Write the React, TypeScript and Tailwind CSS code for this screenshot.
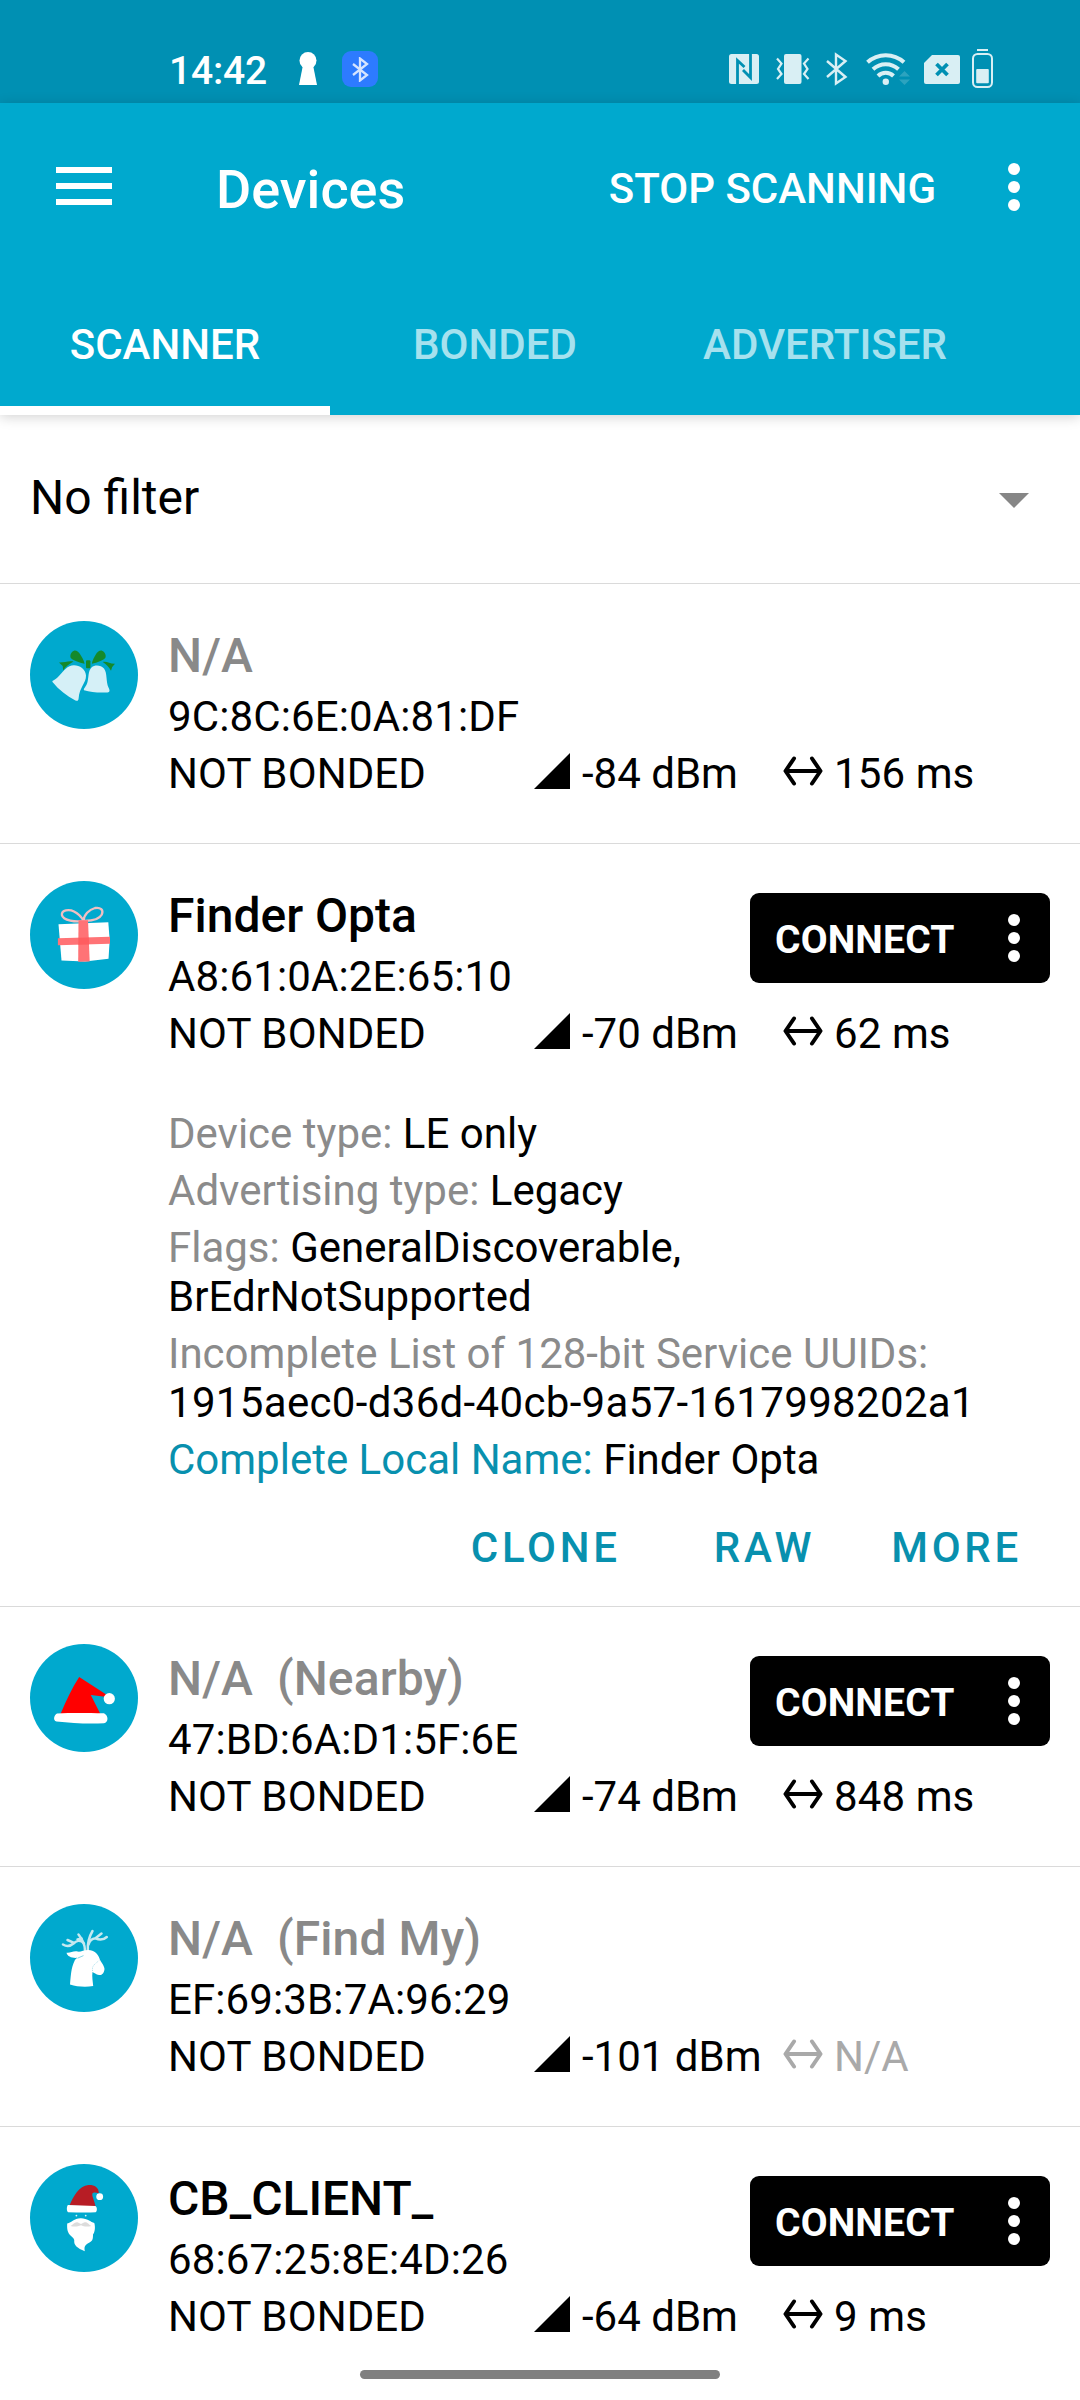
import type { ReactNode } from "react";

type Device = {
  avatar: ReactNode;
  name: string;
  known: boolean;
  address: string;
  rssi: string;
  interval?: string;
  connectable: boolean;
  expanded?: boolean;
};

function Disc({ children }: { children: ReactNode }) {
  return (
    <svg width="108" height="108" viewBox="0 0 108 108" className="block shrink-0">
      <circle cx="54" cy="54" r="54" fill="#00a9ce" />
      {children}
    </svg>
  );
}

const Bells = () => (
  <Disc>
    <g fill="#15892b">
      <path d="M54.6 42.8C49 41.5 43 39.500 40.800 37C39.500 35 41 30.500 44 29.700C46.500 29.200 48.500 31 49.600 32.500C51.300 35 54 39 54.600 42.800Z" />
      <path d="M61.800 42.800C67.500 41.500 73 39.500 75.200 37C76.500 35 75 30.500 72 29.700C69.500 29.200 67.500 31 66.400 32.500C64.700 35 62.400 39 61.800 42.800Z" />
      <rect x="56" y="39.200" width="4.400" height="8" rx="1" />
      <path d="M29 41.500C34 41.700 39 39.400 43.500 40.600C39 43 35.500 46 33.200 49.400L32.700 45Z" />
      <path d="M85 42.800C80 43 77 40.200 72.800 41C76 43 79 46 81 49.800L82.200 46Z" />
    </g>
    <g fill="#d5f0f7">
      <path d="M22.500 61C21.800 59.600 24 59.300 26 57.700C31 54 34 47.500 39.500 45.200C46.500 42.400 55.500 47 56 54.500C56.200 62 49.500 66 48.600 77.500C48.400 80 47 80.300 45 79.200C37 75 29 69 22.500 61Z" />
      <path d="M54 69.200C53.200 67.500 56.500 65.500 57.500 61C58.800 56 58 50 61.500 46.500C65 43.500 71 44.200 74 47.500C77.500 52 75.800 61 78.500 66.500C80 69.500 80 71.300 77.500 71.400C69.500 71.800 61 71.500 54 69.200Z" />
    </g>
  </Disc>
);

const Gift = () => (
  <Disc>
    <path d="M28.500 43.200L78.300 41.200L79.700 59L78.500 77.800L55 80.500L31.500 79.500Z" fill="#fff" />
    <path d="M53.500 39.800C46 41.500 33 39.500 31.900 34C31.400 29 39 28 44 30.500C49 33 52 37 53.500 39.800C53.800 34 59 28.500 65 27C70.500 26 73.800 29 71.800 33.500C69.500 38 62 40 53.500 39.800Z" fill="none" stroke="#f0bfc2" strokeWidth="2.300" />
    <path d="M48.500 39.300H58L59.700 80.500L48.200 80.800Z" fill="#ff7376" />
    <path d="M27.900 57.300L80 55.800V62.800L27.900 64.200Z" fill="#ff7376" />
    <path d="M48.400 56.700L58.900 56.400L59.100 63.400L48.300 63.700Z" fill="#ff5d60" />
  </Disc>
);

const Hat = () => (
  <Disc>
    <path d="M49.200 33L76.200 50.500L75 52.700L60.800 51L70.400 70H30.500C36 57 42 44 49.200 33Z" fill="#f00" />
    <path d="M27 69.500C44 68.800 58 69.200 74 69.300C79 72 78.300 78.500 74 79.200C58 80.200 42 79 26.500 77.500C22.500 76.500 24 71 27 69.500Z" fill="#fff" />
    <circle cx="79.300" cy="54.700" r="5.600" fill="#fff" />
  </Disc>
);

const Reindeer = () => (
  <Disc>
    <g fill="none" stroke="#c5e9f0" strokeWidth="2.500" strokeLinecap="round" strokeLinejoin="round">
      <path d="M55 46.500C55 42 54.500 38 48.500 30.500" />
      <path d="M54 39.500C50 35 46 37 43.500 39.500C40 42.500 36 42.300 33 40.500M37.500 36L43.500 38.700M51.500 34.500L47.500 35.500" />
      <path d="M57.800 46.500C57.500 40 59 33 62.500 27" />
      <path d="M58.500 40.500C60 35 63.500 34.500 65.500 34.300C70 36.500 74 35.500 76.800 33M65.500 34.300L71.500 29.500" />
    </g>
    <path d="M36.500 48.700C40 49.500 43 46.700 47.500 47.500C50 48.300 54 45.900 58.500 46C64 46.500 68 49.500 69.500 54.500C70.500 58 74.200 61 74.500 65C74.200 69 72 71.500 69 71C66 70.700 64 68.500 62.500 68C61.800 73 62.800 77 63.200 82C55 83.500 47 82.600 40 80.500C40.800 72 41 64 44.500 57C45 55.700 46 54.700 47.300 53.800C42 54.300 37.500 52.500 36.500 48.700Z" fill="#fff" />
    <path d="M47.500 54.200L53.500 51.600" stroke="#7ccfe1" strokeWidth=".9" />
    <path d="M62.500 67V63.500C64 60 66.500 59 69.500 56" fill="none" stroke="#9edbe8" strokeWidth=".8" strokeDasharray="1.200 1" />
  </Disc>
);

const Santa = () => (
  <Disc>
    <path d="M39.500 41.500C43 33 49 21.500 58.500 21C64 20.700 69 23 68.800 29.500C66 28 62.500 28 62.300 30C62 33 64.700 37 65.500 42.500Z" fill="#b71d25" />
    <path d="M38 41L65.500 42C67.500 43.500 67.200 48 65.500 48.200C56 49 47 48.300 38 48.200C36.500 47 36.500 42 38 41Z" fill="#fff" />
    <circle cx="69.700" cy="32.700" r="3.400" fill="#fff" />
    <circle cx="46.400" cy="51.600" r=".9" fill="#d7f1f7" />
    <circle cx="55.700" cy="51.600" r=".9" fill="#d7f1f7" />
    <path d="M37.200 59.500C42 58.500 44 54 51 54.200C57 54.300 61 58 64.300 59C65.500 63 65 68 63 70.500C63 74 63 77 59.500 78.500C54 81.500 54.300 83 54.800 87.300C51 85.500 44.500 83 44.200 78C45 74.500 42 73 40 71C37 67.500 37 63.500 37.200 59.500Z" fill="#fff" />
    <path d="M40.500 62C43 61 44.500 57.500 48 58.500L51 60L54 58.500C57.500 57.500 59 61 61.200 62C57 63.200 53.500 62.500 51 61.200C48 62.500 44.500 63.200 40.500 62Z" fill="#dcdcdc" />
  </Disc>
);

const Dots = () => (
  <svg width="12" height="48" viewBox="0 0 12 48" fill="#fff" className="block shrink-0">
    <circle cx="6" cy="6" r="6" />
    <circle cx="6" cy="24" r="6" />
    <circle cx="6" cy="42" r="6" />
  </svg>
);

const Signal = () => (
  <svg width="36" height="36" viewBox="0 0 36 36" className="block shrink-0">
    <path d="M0 36L36 0V36Z" />
  </svg>
);

const Interval = () => (
  <svg width="40" height="30" viewBox="0 0 40 30" fill="none" stroke="currentColor" strokeWidth="4" strokeLinejoin="round" strokeLinecap="round" className="block shrink-0">
    <path d="M3 15H37M11 2.500L2.500 15L11 27.500M29 2.500L37.500 15L29 27.500" />
  </svg>
);

function StatusBar() {
  return (
    <div className="flex h-[103px] items-start bg-[#0090b3] pl-[169px] text-[#d9eff4]">
      <div className="mt-[48px] w-[130px] text-[39px] leading-[46px] font-medium tracking-[-0.2px] text-white">14:42</div>
      <svg width="18" height="33" viewBox="0 0 18 33" fill="#fff" className="mt-[52px] mr-[25px] shrink-0">
        <circle cx="9" cy="8.500" r="8.500" />
        <path d="M4 13H14L18 33H0Z" />
      </svg>
      <div className="mt-[51px] mr-[351px] flex size-[36px] shrink-0 items-center justify-center rounded-[9px] bg-[#2d7bff]">
        <svg width="17" height="25" viewBox="0 0 17 25" fill="none" stroke="#d5e5ff" strokeWidth="2.300">
          <path d="M1 7L15 18L8 23.500V1.500L15 7L1 18" />
        </svg>
      </div>
      {/* NFC */}
      <svg width="30" height="30" viewBox="0 0 30 30" className="mt-[54px] mr-[17px] shrink-0">
        <rect width="30" height="30" rx="2.500" fill="currentColor" />
        <path d="M8.500 30V6.500L15.500 13M14 16L21.500 23.500V0" fill="none" stroke="#0090b3" strokeWidth="2.800" />
      </svg>
      {/* Vibrate */}
      <svg width="34" height="30" viewBox="0 0 34 30" className="mt-[54px] mr-[16px] shrink-0" fill="none" stroke="currentColor" strokeWidth="2.200">
        <rect x="8" width="17.500" height="30" rx="2" fill="currentColor" stroke="none" />
        <path d="M1 4.500L5.500 9.500L2 15L5.500 20L1 25M32.500 4.500L28 9.500L31.500 15L28 20L32.500 25" />
      </svg>
      {/* Bluetooth */}
      <svg width="22" height="34" viewBox="0 0 22 34" className="mt-[52px] mr-[17px] shrink-0" fill="none" stroke="currentColor" strokeWidth="2.400">
        <path d="M1 9L19.500 25L10 31.500V2.500L19.500 9L1 25" />
      </svg>
      {/* Wi-Fi with traffic indicator */}
      <svg width="46" height="36" viewBox="0 0 46 36" className="mt-[50px] mr-[13px] shrink-0" fill="none" stroke="currentColor" strokeWidth="4">
        <path d="M2.500 12.300A27 27 0 0 1 39 12.300M8 19.300A18.500 18.500 0 0 1 33.500 19.300M13 26A11 11 0 0 1 28.500 26" />
        <circle cx="20.800" cy="31.800" r="3.200" fill="currentColor" stroke="none" />
        <path d="M34 26.500L39.500 21L45 26.500ZM34 29.500H45L39.500 35Z" fill="#2ca3bf" stroke="none" />
      </svg>
      {/* SIM unavailable */}
      <svg width="36" height="29" viewBox="0 0 36 29" className="mt-[55px] mr-[12px] shrink-0">
        <path d="M8 0H34Q36 0 36 2V27Q36 29 34 29H2Q0 29 0 27V8Z" fill="currentColor" />
        <path d="M12.500 9L23.500 20M23.500 9L12.500 20" stroke="#0090b3" strokeWidth="3.800" />
      </svg>
      {/* Battery */}
      <svg width="21" height="39" viewBox="0 0 21 39" className="mt-[49px] shrink-0">
        <rect x="5" width="11" height="2" fill="currentColor" />
        <rect x="1" y="5" width="19" height="33" rx="4.500" fill="none" stroke="currentColor" strokeWidth="2" />
        <rect x="4.200" y="20" width="12.600" height="14.300" rx="1" fill="currentColor" />
      </svg>
    </div>
  );
}

function AppBar() {
  return (
    <header className="relative z-10 h-[312px] bg-[#00a9ce] text-white shadow-[0_2px_12px_rgba(0,0,0,0.18)]">
      <div className="flex h-[168px] items-center pr-[60px] pl-[56px]">
        <div className="mb-[2px] flex w-[56px] flex-col gap-[10px]">
          <span className="h-[6px] bg-white" />
          <span className="h-[6px] bg-white" />
          <span className="h-[6px] bg-white" />
        </div>
        <h1 className="ml-[104px] pt-[4px] text-[54px] leading-[63px] font-medium">Devices</h1>
        <button className="mr-[72px] ml-auto pt-[2px] text-[42px] leading-[49px] font-medium">STOP SCANNING</button>
        <Dots />
      </div>
      <nav className="flex h-[144px] text-[42px] leading-[49px] font-medium">
        <div className="w-[330px] border-b-[9px] border-white pt-[49px] text-center">SCANNER</div>
        <div className="w-[330px] pt-[49px] text-center text-[#a6e1ee]">BONDED</div>
        <div className="w-[330px] pt-[49px] text-center text-[#a6e1ee]">ADVERTISER</div>
      </nav>
    </header>
  );
}

function Details() {
  return (
    <div className="flex flex-col pt-[51px]">
      <div className="flex flex-col gap-[8px] text-[#8b8b8b] [&_b]:font-normal [&_b]:text-black">
        <p>Device type: <b>LE only</b></p>
        <p>Advertising type: <b>Legacy</b></p>
        <p>Flags: <b>GeneralDiscoverable,<br />BrEdrNotSupported</b></p>
        <p>Incomplete List of 128-bit Service UUIDs:<br /><b className="tracking-[0.33px]">1915aec0-d36d-40cb-9a57-1617998202a1</b></p>
        <p><span className="text-[#0890ae]">Complete Local Name:</span> <b>Finder Opta</b></p>
      </div>
      <div className="mt-[39px] -mb-[11px] flex justify-end pr-[58px] font-medium tracking-[3.750px] text-[#0890ae]">
        <span className="mr-[93px]">CLONE</span>
        <span className="mr-[76px]">RAW</span>
        <span>MORE</span>
      </div>
    </div>
  );
}

function DeviceRow({ d }: { d: Device }) {
  return (
    <section className="flex shrink-0 border-b border-[#dadada] pt-[37px] pb-[45px] pl-[30px] last:border-b-0">
      {d.avatar}
      <div className="ml-[30px] flex-1 pt-[6px] text-[42px] leading-[49px] whitespace-nowrap">
        <div className="flex items-start justify-between pr-[30px]">
          <div>
            <h2 className={d.known ? "text-[48px] leading-[57px] font-medium whitespace-pre" : "text-[48px] leading-[57px] font-medium tracking-[0.1px] whitespace-pre text-[#898989]"}>{d.name}</h2>
            <p className="mt-[8px] tracking-[0.12px]">{d.address}</p>
          </div>
          {d.connectable && (
            <button className="mt-[6px] flex h-[90px] w-[300px] items-center justify-between rounded-[9px] bg-black pr-[30px] pl-[25px] text-[39px] font-bold tracking-[0.15px] text-white">
              <span className="pt-[4px]">CONNECT</span>
              <Dots />
            </button>
          )}
        </div>
        <div className="mt-[8px] flex">
          <span className="w-[366px] tracking-[0.1px]">NOT BONDED</span>
          <span className="flex w-[249px] gap-[12px]"><span className="pt-[4px]"><Signal /></span>{d.rssi}</span>
          <span className={d.interval ? "flex gap-[11px] tracking-[0.1px]" : "flex gap-[11px] text-[#a9a9a9]"}><span className="pt-[7px]"><Interval /></span>{d.interval ?? "N/A"}</span>
        </div>
        {d.expanded && <Details />}
      </div>
    </section>
  );
}

const devices: Device[] = [
  { avatar: <Bells />, name: "N/A", known: false, address: "9C:8C:6E:0A:81:DF", rssi: "-84 dBm", interval: "156 ms", connectable: false },
  { avatar: <Gift />, name: "Finder Opta", known: true, address: "A8:61:0A:2E:65:10", rssi: "-70 dBm", interval: "62 ms", connectable: true, expanded: true },
  { avatar: <Hat />, name: "N/A  (Nearby)", known: false, address: "47:BD:6A:D1:5F:6E", rssi: "-74 dBm", interval: "848 ms", connectable: true },
  { avatar: <Reindeer />, name: "N/A  (Find My)", known: false, address: "EF:69:3B:7A:96:29", rssi: "-101 dBm", connectable: false },
  { avatar: <Santa />, name: "CB_CLIENT_", known: true, address: "68:67:25:8E:4D:26", rssi: "-64 dBm", interval: "9 ms", connectable: true },
];

export default function App() {
  return (
    <div className="relative h-[2400px] w-[1080px] overflow-hidden bg-white font-['Roboto',sans-serif] text-black">
      <StatusBar />
      <AppBar />
      <div className="flex h-[169px] items-center justify-between border-b border-[#dadada] pr-[51px] pl-[30px]">
        <span className="-mt-[3px] text-[48px] leading-[57px]">No filter</span>
        <svg width="30" height="15" viewBox="0 0 30 15" fill="#868686" className="mt-[2px]">
          <path d="M0 0H30L15 15Z" />
        </svg>
      </div>
      <main>
        {devices.map((d) => <DeviceRow key={d.address} d={d} />)}
      </main>
      <div className="absolute bottom-[21px] left-[360px] h-[9px] w-[360px] rounded-full bg-[#808080]" />
    </div>
  );
}
